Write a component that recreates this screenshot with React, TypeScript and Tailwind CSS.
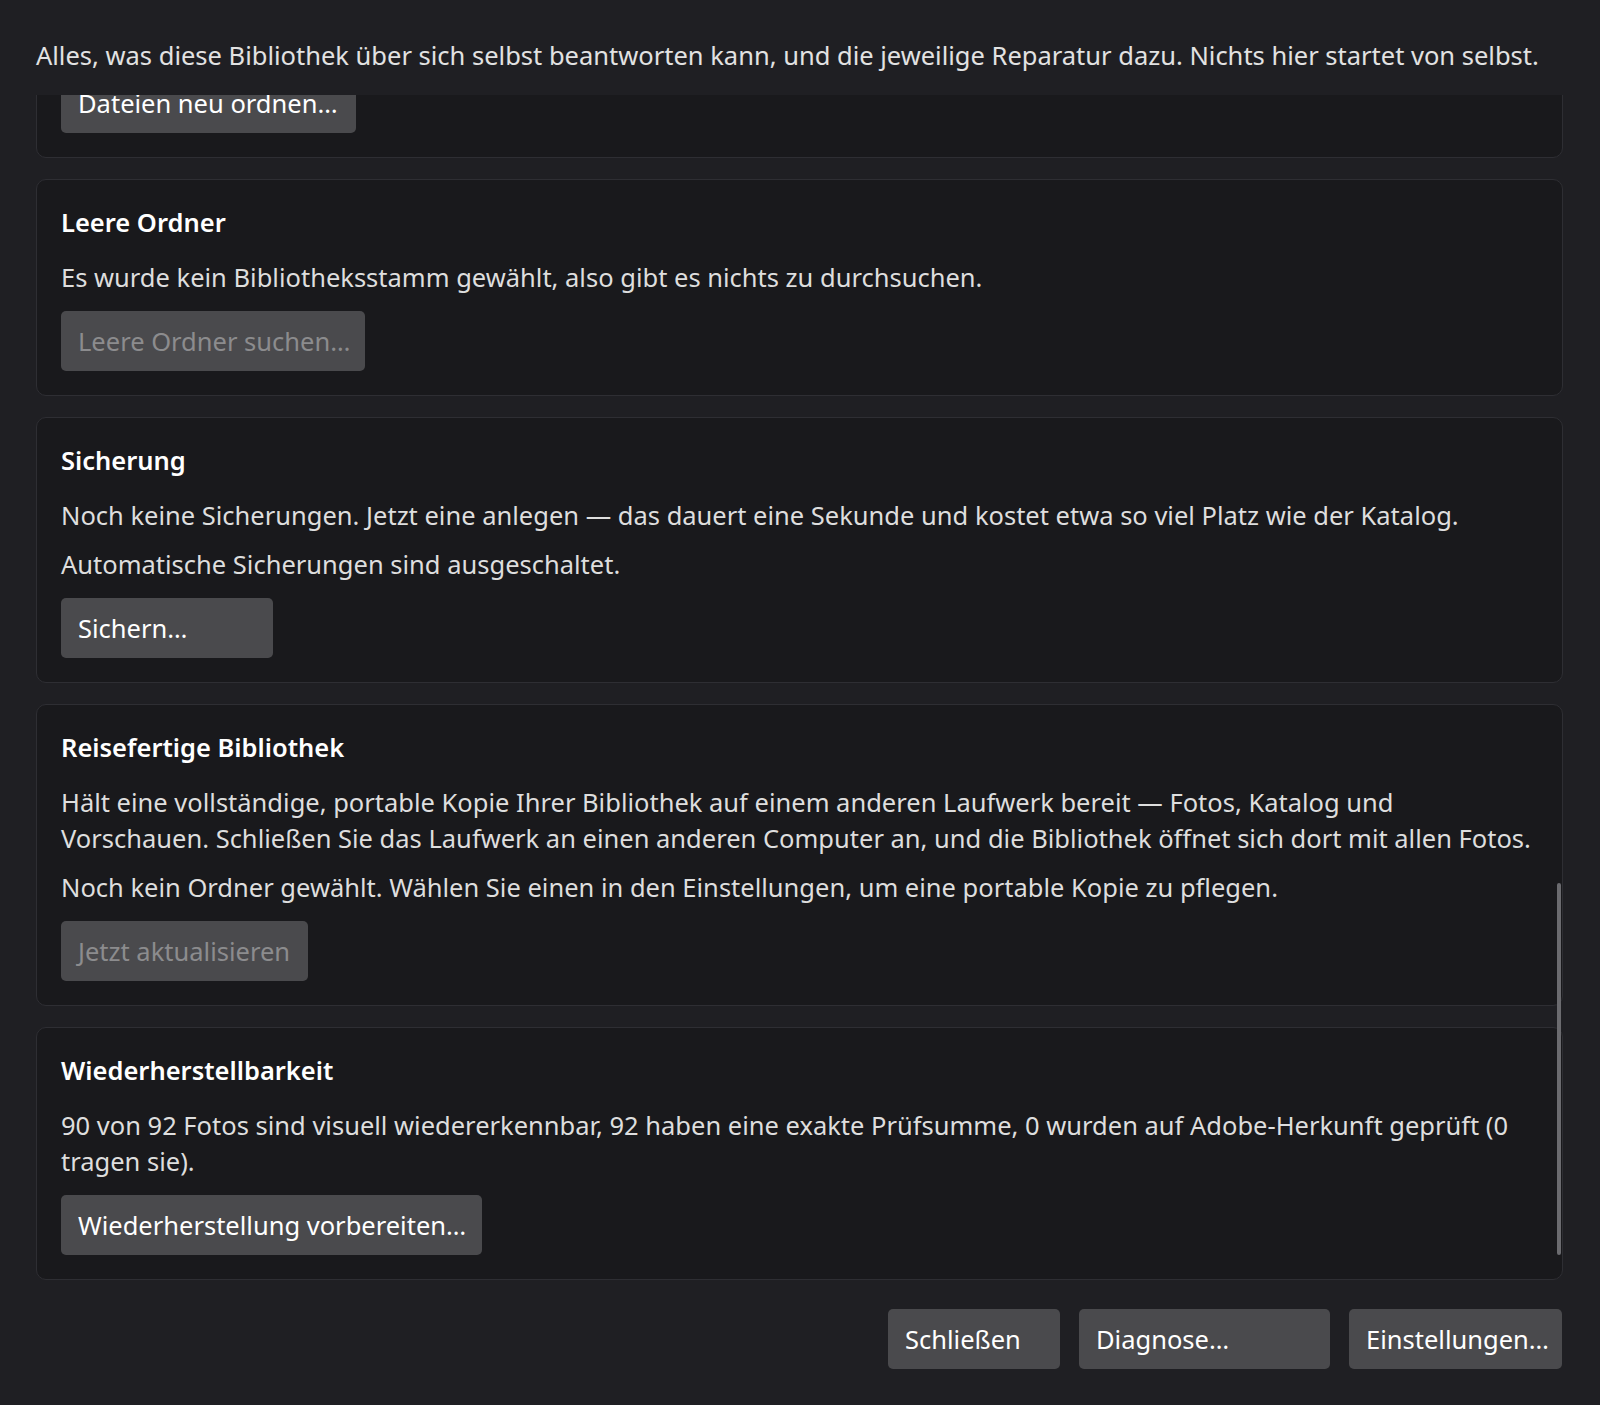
import React from "react";

type Action = { label: string; disabled?: boolean; width: string };

type Section = {
  title?: string;
  paragraphs: string[];
  action: Action;
};

const sections: Section[] = [
  {
    paragraphs: [],
    action: { label: "Dateien neu ordnen…", width: "w-[295px]" },
  },
  {
    title: "Leere Ordner",
    paragraphs: [
      "Es wurde kein Bibliotheksstamm gewählt, also gibt es nichts zu durchsuchen.",
    ],
    action: { label: "Leere Ordner suchen…", disabled: true, width: "w-[304px]" },
  },
  {
    title: "Sicherung",
    paragraphs: [
      "Noch keine Sicherungen. Jetzt eine anlegen — das dauert eine Sekunde und kostet etwa so viel Platz wie der Katalog.",
      "Automatische Sicherungen sind ausgeschaltet.",
    ],
    action: { label: "Sichern…", width: "w-[212px]" },
  },
  {
    title: "Reisefertige Bibliothek",
    paragraphs: [
      "Hält eine vollständige, portable Kopie Ihrer Bibliothek auf einem anderen Laufwerk bereit — Fotos, Katalog und Vorschauen. Schließen Sie das Laufwerk an einen anderen Computer an, und die Bibliothek öffnet sich dort mit allen Fotos.",
      "Noch kein Ordner gewählt. Wählen Sie einen in den Einstellungen, um eine portable Kopie zu pflegen.",
    ],
    action: { label: "Jetzt aktualisieren", disabled: true, width: "w-[247px]" },
  },
  {
    title: "Wiederherstellbarkeit",
    paragraphs: [
      "90 von 92 Fotos sind visuell wiedererkennbar, 92 haben eine exakte Prüfsumme, 0 wurden auf Adobe-Herkunft geprüft (0 tragen sie).",
    ],
    action: { label: "Wiederherstellung vorbereiten…", width: "w-[421px]" },
  },
];

function Button({ label, disabled, width }: Action) {
  return (
    <button
      disabled={disabled}
      className={`${width} h-[60px] shrink-0 rounded-[5px] bg-[#4a4a4d] pl-[17px] pr-[10px] text-left text-[25.5px] leading-[36px] whitespace-nowrap ${
        disabled ? "text-[#8c8c8e]" : "text-white"
      }`}
    >
      {label}
    </button>
  );
}

function Card({ title, paragraphs, action }: Section) {
  return (
    <section className="rounded-[10px] border border-[#2e2e33] bg-[#19191c] p-[24px]">
      {title && (
        <h2 className="mb-[19px] text-[25.5px] font-semibold leading-[36px] text-white">
          {title}
        </h2>
      )}
      {paragraphs.length > 0 && (
        <div className="mb-[16px] flex flex-col gap-[13px]">
          {paragraphs.map((p) => (
            <p key={p} className="text-[25.5px] leading-[36px] text-[#dedede]">
              {p}
            </p>
          ))}
        </div>
      )}
      <Button {...action} />
    </section>
  );
}

export default function App() {
  return (
    <div className="flex h-[1405px] w-full flex-col overflow-hidden bg-[#1f1f23] font-['Noto_Sans',sans-serif]">
      {/* Intro line */}
      <header className="px-[36px] pt-[37px] pb-[22px] text-[25.5px] leading-[36px] whitespace-nowrap text-[#e2e2e2]">
        Alles, was diese Bibliothek über sich selbst beantworten kann, und die
        jeweilige Reparatur dazu. Nichts hier startet von selbst.
      </header>

      {/* Scrolled list of checks */}
      <div className="relative h-[1188px] overflow-hidden pl-[36px] pr-[37px]">
        <div className="-mt-[47px] flex flex-col gap-[21px]">
          {sections.map((s, i) => (
            <Card key={i} {...s} />
          ))}
        </div>
        {/* overlay scrollbar thumb */}
        <div className="absolute top-[788px] right-[39px] h-[372px] w-[4px] rounded-full bg-[#6b6b6f]" />
      </div>

      {/* Dialog buttons */}
      <footer className="flex justify-end gap-[19px] pt-[26px] pr-[38px]">
        <Button label="Schließen" width="w-[172px]" />
        <Button label="Diagnose…" width="w-[251px]" />
        <Button label="Einstellungen…" width="w-[213px]" />
      </footer>
    </div>
  );
}
